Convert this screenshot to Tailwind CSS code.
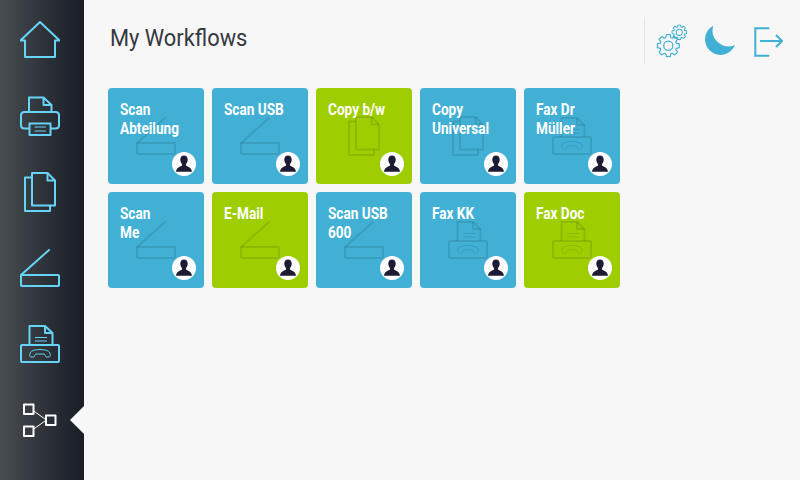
<!DOCTYPE html>
<html lang="en">
<head>
  <meta charset="UTF-8" />
  <title>My Workflows</title>
  <script src="https://cdn.jsdelivr.net/npm/@tailwindcss/browser@4"></script>
</head>
<body class="w-[800px] h-[480px] overflow-hidden flex bg-[#f7f7f7] font-['Roboto',sans-serif]">

  <!-- Shared icons -->
  <svg class="hidden">
    <symbol id="scan" viewBox="0 0 40 40">
      <g fill="none" stroke="currentColor" stroke-width="2" stroke-linejoin="round" stroke-linecap="round">
        <path d="M29 2 1 27" />
        <rect x="1" y="27" width="38" height="11" rx="1" />
      </g>
    </symbol>
    <symbol id="copy" viewBox="0 0 40 40">
      <g fill="none" stroke="currentColor" stroke-width="2" stroke-linejoin="round">
        <path d="M12 5.500H5V39H30V33.500" />
        <path d="M12 1H27.500L35 8.500V33.500H12Z" />
        <path d="M27.500 1V8.500H35" />
      </g>
    </symbol>
    <symbol id="fax" viewBox="0 0 40 40">
      <g fill="none" stroke="currentColor" stroke-width="2" stroke-linejoin="round">
        <path d="M9.500 21V2H25L32.500 9V21" />
        <path d="M25 2V9H32.500" />
        <rect x="1" y="21" width="38" height="17" rx="1" />
        <path d="M15 13.500H27M15 17H27" stroke-width="1" />
        <path d="M11 33C9 33 9.500 28 12 27C16 25 24 25 28 27C30.500 28 31 33 29 33H26.500C25 33 25.500 30 24 30H16C14.500 30 15 33 13.500 33Z" stroke-width="1" />
      </g>
    </symbol>
    <symbol id="user" viewBox="0 0 24 24">
      <path fill="#1e1b35" d="M12 3.500c-2.600 0-3.700 2-3.700 4 0 2 .8 3.500 1.700 4.500v1.200c0 1.200-5.600 1.300-6 6.500h16c-.4-5.200-6-5.300-6-6.500V12c.9-1 1.700-2.500 1.700-4.500 0-2-1.100-4-3.700-4z" />
    </symbol>
    <symbol id="gear" viewBox="-12 -12 24 24">
      <path d="M-2.600-8-1.900-11H1.900L2.600-8 3.820-7.490 6.430-9.120 9.120-6.430 7.490-3.820 8-2.600 11-1.900V1.900L8 2.600 7.490 3.820 9.120 6.430 6.430 9.120 3.820 7.490 2.600 8 1.900 11H-1.900L-2.600 8-3.820 7.490-6.430 9.120-9.120 6.430-7.490 3.820-8 2.600-11 1.900V-1.900L-8-2.600-7.490-3.820-9.120-6.430-6.430-9.120-3.820-7.490Z" />
      <circle r="4.600" />
    </symbol>
  </svg>

  <!-- Sidebar -->
  <nav class="relative w-[84px] h-full shrink-0 flex flex-col items-start gap-[36px] pt-[20px] pl-[20px] bg-linear-to-r from-[#474d50] to-[#191d27] text-[#66d4f7]">
    <svg class="w-10 h-10" viewBox="0 0 40 40" fill="none" stroke="currentColor" stroke-width="2" stroke-linejoin="round">
      <path d="M5 20.500V37H35V20.500H39.500L20 2 .5 20.500Z" />
    </svg>
    <svg class="w-10 h-10" viewBox="0 0 40 40" fill="none" stroke="currentColor" stroke-width="2" stroke-linejoin="round">
      <path d="M9 16V1.500H23.500L31.500 9V16" />
      <path d="M23.500 1.500V9H31.500" />
      <path d="M9.500 32.500H4.500Q1 32.500 1 29V19.500Q1 16 4.500 16H35.500Q39 16 39 19.500V29Q39 32.500 35.500 32.500H30.500" />
      <rect x="9.500" y="27.500" width="21" height="11.500" />
      <path d="M14.500 31H26M14.500 35H26" stroke-width="1" />
    </svg>
    <svg class="w-10 h-10"><use href="#copy" /></svg>
    <svg class="w-10 h-10"><use href="#scan" /></svg>
    <svg class="w-10 h-10"><use href="#fax" /></svg>
    <svg class="w-10 h-10 text-white" viewBox="0 0 40 40" fill="none" stroke="currentColor" stroke-linejoin="round">
      <path d="M13 10.500 25 19M13 29.500 25 21" stroke-width="1" />
      <g stroke-width="2">
        <rect x="4" y="4.500" width="9.500" height="9.500" />
        <rect x="4" y="26.500" width="9.500" height="9.500" />
        <rect x="26" y="15.500" width="9.500" height="9.500" />
      </g>
    </svg>
    <!-- active marker -->
    <div class="absolute right-0 top-[406px] w-[14px] h-[28px] bg-[#f7f7f7] [clip-path:polygon(100%_0,0_50%,100%_100%)]"></div>
  </nav>

  <main class="flex-1 pl-[24px]">
    <header class="flex items-center h-[80px] mb-[8px] pl-[2px] pr-[17px]">
      <h1 class="mb-[4px] text-[24px] leading-[30px] text-[#35393f] origin-left scale-x-[.91]">My Workflows</h1>
      <div class="ml-auto w-px h-[47px] bg-[#dce8ee]"></div>
      <svg class="ml-[11px] w-[34px] h-[34px] mt-[2px] text-[#41b0d4]" viewBox="0 0 34 34" fill="none" stroke="currentColor" stroke-width="1.200" stroke-linejoin="round">
        <use href="#gear" x="0.300" y="9.700" width="24" height="24" />
        <use href="#gear" x="15.300" y="0.300" width="16" height="16" stroke-width="1.600" />
      </svg>
      <svg class="ml-[15px] w-[30px] h-[31px] text-[#41b0d4]" viewBox="0 0 30 31">
        <path fill="currentColor" d="M8.300.7A15.500 15.500 0 1 0 30 20 16 16 0 0 1 8.300.7Z" />
      </svg>
      <svg class="ml-[19px] w-[29px] h-[30px] mt-[3px] text-[#41b0d4]" viewBox="0 0 29 30" fill="none" stroke="currentColor" stroke-width="2">
        <path d="M15.300 1.300H1.300V28.700H15.300" />
        <path d="M6 14H28M22 8l6 6-6 6" />
      </svg>
    </header>

    <div class="grid grid-cols-[repeat(5,96px)] auto-rows-[96px] gap-2 text-white text-[16px] leading-[19px] font-bold">
      <div class="relative rounded-[4px] bg-[#41b0d4] p-3">
        <svg class="absolute left-[28px] top-[28px] w-10 h-10 text-black/10"><use href="#scan" /></svg>
        <p class="relative origin-left scale-x-[.85] whitespace-nowrap">Scan<br />Abteilung</p>
        <svg class="absolute right-2 bottom-2 w-6 h-6 rounded-full bg-white"><use href="#user" /></svg>
      </div>
      <div class="relative rounded-[4px] bg-[#41b0d4] p-3">
        <svg class="absolute left-[28px] top-[28px] w-10 h-10 text-black/10"><use href="#scan" /></svg>
        <p class="relative origin-left scale-x-[.85] whitespace-nowrap">Scan USB</p>
        <svg class="absolute right-2 bottom-2 w-6 h-6 rounded-full bg-white"><use href="#user" /></svg>
      </div>
      <div class="relative rounded-[4px] bg-[#9fce00] p-3">
        <svg class="absolute left-[28px] top-[28px] w-10 h-10 text-black/10"><use href="#copy" /></svg>
        <p class="relative origin-left scale-x-[.85] whitespace-nowrap">Copy b/w</p>
        <svg class="absolute right-2 bottom-2 w-6 h-6 rounded-full bg-white"><use href="#user" /></svg>
      </div>
      <div class="relative rounded-[4px] bg-[#41b0d4] p-3">
        <svg class="absolute left-[28px] top-[28px] w-10 h-10 text-black/10"><use href="#copy" /></svg>
        <p class="relative origin-left scale-x-[.85] whitespace-nowrap">Copy<br />Universal</p>
        <svg class="absolute right-2 bottom-2 w-6 h-6 rounded-full bg-white"><use href="#user" /></svg>
      </div>
      <div class="relative rounded-[4px] bg-[#41b0d4] p-3">
        <svg class="absolute left-[28px] top-[28px] w-10 h-10 text-black/10"><use href="#fax" /></svg>
        <p class="relative origin-left scale-x-[.85] whitespace-nowrap">Fax Dr<br />Müller</p>
        <svg class="absolute right-2 bottom-2 w-6 h-6 rounded-full bg-white"><use href="#user" /></svg>
      </div>

      <div class="relative rounded-[4px] bg-[#41b0d4] p-3">
        <svg class="absolute left-[28px] top-[28px] w-10 h-10 text-black/10"><use href="#scan" /></svg>
        <p class="relative origin-left scale-x-[.85] whitespace-nowrap">Scan<br />Me</p>
        <svg class="absolute right-2 bottom-2 w-6 h-6 rounded-full bg-white"><use href="#user" /></svg>
      </div>
      <div class="relative rounded-[4px] bg-[#9fce00] p-3">
        <svg class="absolute left-[28px] top-[28px] w-10 h-10 text-black/10"><use href="#scan" /></svg>
        <p class="relative origin-left scale-x-[.85] whitespace-nowrap">E-Mail</p>
        <svg class="absolute right-2 bottom-2 w-6 h-6 rounded-full bg-white"><use href="#user" /></svg>
      </div>
      <div class="relative rounded-[4px] bg-[#41b0d4] p-3">
        <svg class="absolute left-[28px] top-[28px] w-10 h-10 text-black/10"><use href="#scan" /></svg>
        <p class="relative origin-left scale-x-[.85] whitespace-nowrap">Scan USB<br />600</p>
        <svg class="absolute right-2 bottom-2 w-6 h-6 rounded-full bg-white"><use href="#user" /></svg>
      </div>
      <div class="relative rounded-[4px] bg-[#41b0d4] p-3">
        <svg class="absolute left-[28px] top-[28px] w-10 h-10 text-black/10"><use href="#fax" /></svg>
        <p class="relative origin-left scale-x-[.85] whitespace-nowrap">Fax KK</p>
        <svg class="absolute right-2 bottom-2 w-6 h-6 rounded-full bg-white"><use href="#user" /></svg>
      </div>
      <div class="relative rounded-[4px] bg-[#9fce00] p-3">
        <svg class="absolute left-[28px] top-[28px] w-10 h-10 text-black/10"><use href="#fax" /></svg>
        <p class="relative origin-left scale-x-[.85] whitespace-nowrap">Fax Doc</p>
        <svg class="absolute right-2 bottom-2 w-6 h-6 rounded-full bg-white"><use href="#user" /></svg>
      </div>
    </div>
  </main>

</body>
</html>
